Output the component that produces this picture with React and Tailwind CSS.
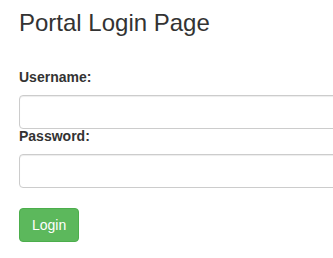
export default function App() {
  return (
    <div className="w-full h-[258px] overflow-hidden bg-white pl-[19px] text-[#333]" style={{ fontFamily: '"Liberation Sans", Arial, sans-serif' }}>
      <h3 className="mt-[10px] text-[24px] leading-[26px] font-normal">Portal Login Page</h3>
      <form onSubmit={(e) => e.preventDefault()}>
        <label className="block mt-[31px] text-[14px] leading-[20px] font-bold">Username:</label>
        <input type="text" className="block mt-[8px] w-[360px] h-[34px] border border-[#ccc] rounded-[4px] px-3 text-[14px] shadow-[inset_0_1px_1px_rgba(0,0,0,0.075)] outline-none" />
        <label className="block text-[14px] leading-[14px] font-bold">Password:</label>
        <input type="password" className="block mt-[11px] w-[360px] h-[34px] border border-[#ccc] rounded-[4px] px-3 text-[14px] shadow-[inset_0_1px_1px_rgba(0,0,0,0.075)] outline-none" />
        <button type="submit" className="block mt-[20px] h-[34px] px-3 bg-[#5cb85c] border border-[#4cae4c] rounded-[4px] text-white text-[14px] leading-[20px]">Login</button>
      </form>
    </div>
  );
}
